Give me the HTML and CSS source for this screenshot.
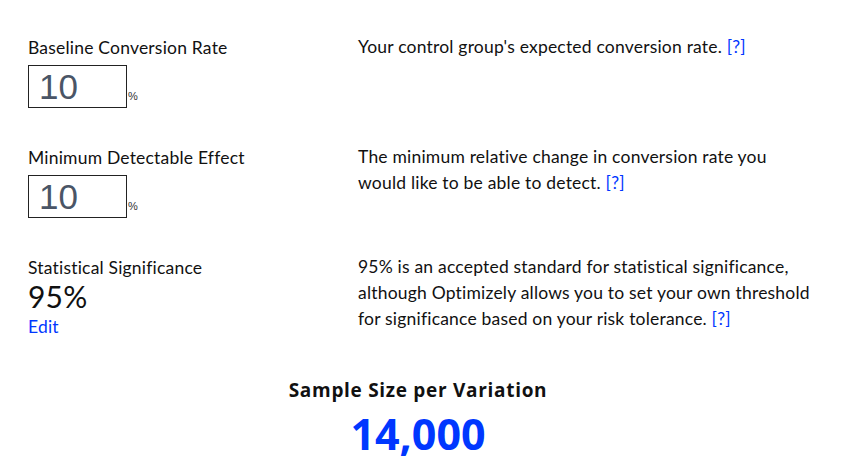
FILE: index.html
```html
<!DOCTYPE html>
<html>
<head>
<meta charset="utf-8">
<link rel="stylesheet" href="styles.css">
</head>
<body>
<div class="page">
  <div class="row">
    <div class="field">
      <div class="label">Baseline Conversion Rate</div>
      <div class="inputline"><input class="num" type="text" value="10"><span class="pct">%</span></div>
    </div>
    <div class="desc">Your control group's expected conversion rate. <a class="help" href="#">[?]</a></div>
  </div>
  <div class="row">
    <div class="field">
      <div class="label">Minimum Detectable Effect</div>
      <div class="inputline"><input class="num" type="text" value="10"><span class="pct">%</span></div>
    </div>
    <div class="desc">The minimum relative change in conversion rate you would like to be able to detect. <a class="help" href="#">[?]</a></div>
  </div>
  <div class="row">
    <div class="field">
      <div class="label">Statistical Significance</div>
      <div class="big">95%</div>
      <a class="edit" href="#">Edit</a>
    </div>
    <div class="desc">95% is an accepted standard for statistical significance, although Optimizely allows you to set your own threshold for significance based on your risk tolerance. <a class="help" href="#">[?]</a></div>
  </div>
  <div class="result">
    <div class="rtitle">Sample Size per Variation</div>
    <div class="rvalue">14,000</div>
  </div>
</div>
</body>
</html>
```
FILE: styles.css
```css
html, body {
  margin: 0;
  padding: 0;
  background: #fff;
}
body {
  font-family: Lato, "Open Sans", sans-serif;
  color: #111;
  font-size: 17.5px;
  letter-spacing: 0.2px;
}
.page {
  padding: 36px 0 0 28px;
  width: 790px;
}
.row {
  display: grid;
  grid-template-columns: 330px 455px;
  height: 110px;
}
.label {
  line-height: 24px;
  height: 29px;
}
.inputline {
  display: flex;
  align-items: flex-end;
}
.num {
  box-sizing: border-box;
  width: 99px;
  height: 43px;
  border: 1px solid #222;
  padding: 0 0 0 10px;
  margin: 0;
  font-family: "Liberation Sans", Arial, sans-serif;
  font-size: 35px;
  letter-spacing: 0;
  color: #4a5566;
  outline: none;
}
.pct {
  font-family: "Liberation Sans", Arial, sans-serif;
  font-size: 11px;
  letter-spacing: 0;
  color: #333;
  margin-left: 1px;
  line-height: 14px;
  margin-bottom: 5px;
}
.big {
  font-size: 30px;
  line-height: 32px;
  margin-top: -5px;
}
.edit {
  display: block;
  color: #0037ff;
  text-decoration: none;
  line-height: 24px;
  margin-top: 3px;
}
.desc {
  line-height: 26px;
  margin-top: -2px;
}
.help {
  color: #0037ff;
  text-decoration: none;
}
.result {
  text-align: center;
  width: 780px;
  margin-top: 10px;
}
.rtitle {
  font-family: "Open Sans", sans-serif;
  font-weight: 700;
  font-size: 19px;
  letter-spacing: 0.7px;
  line-height: 28px;
}
.rvalue {
  font-family: "Open Sans", sans-serif;
  font-weight: 700;
  font-size: 43px;
  letter-spacing: 0;
  line-height: 52px;
  margin-top: 4px;
  color: #0037ff;
}
```
